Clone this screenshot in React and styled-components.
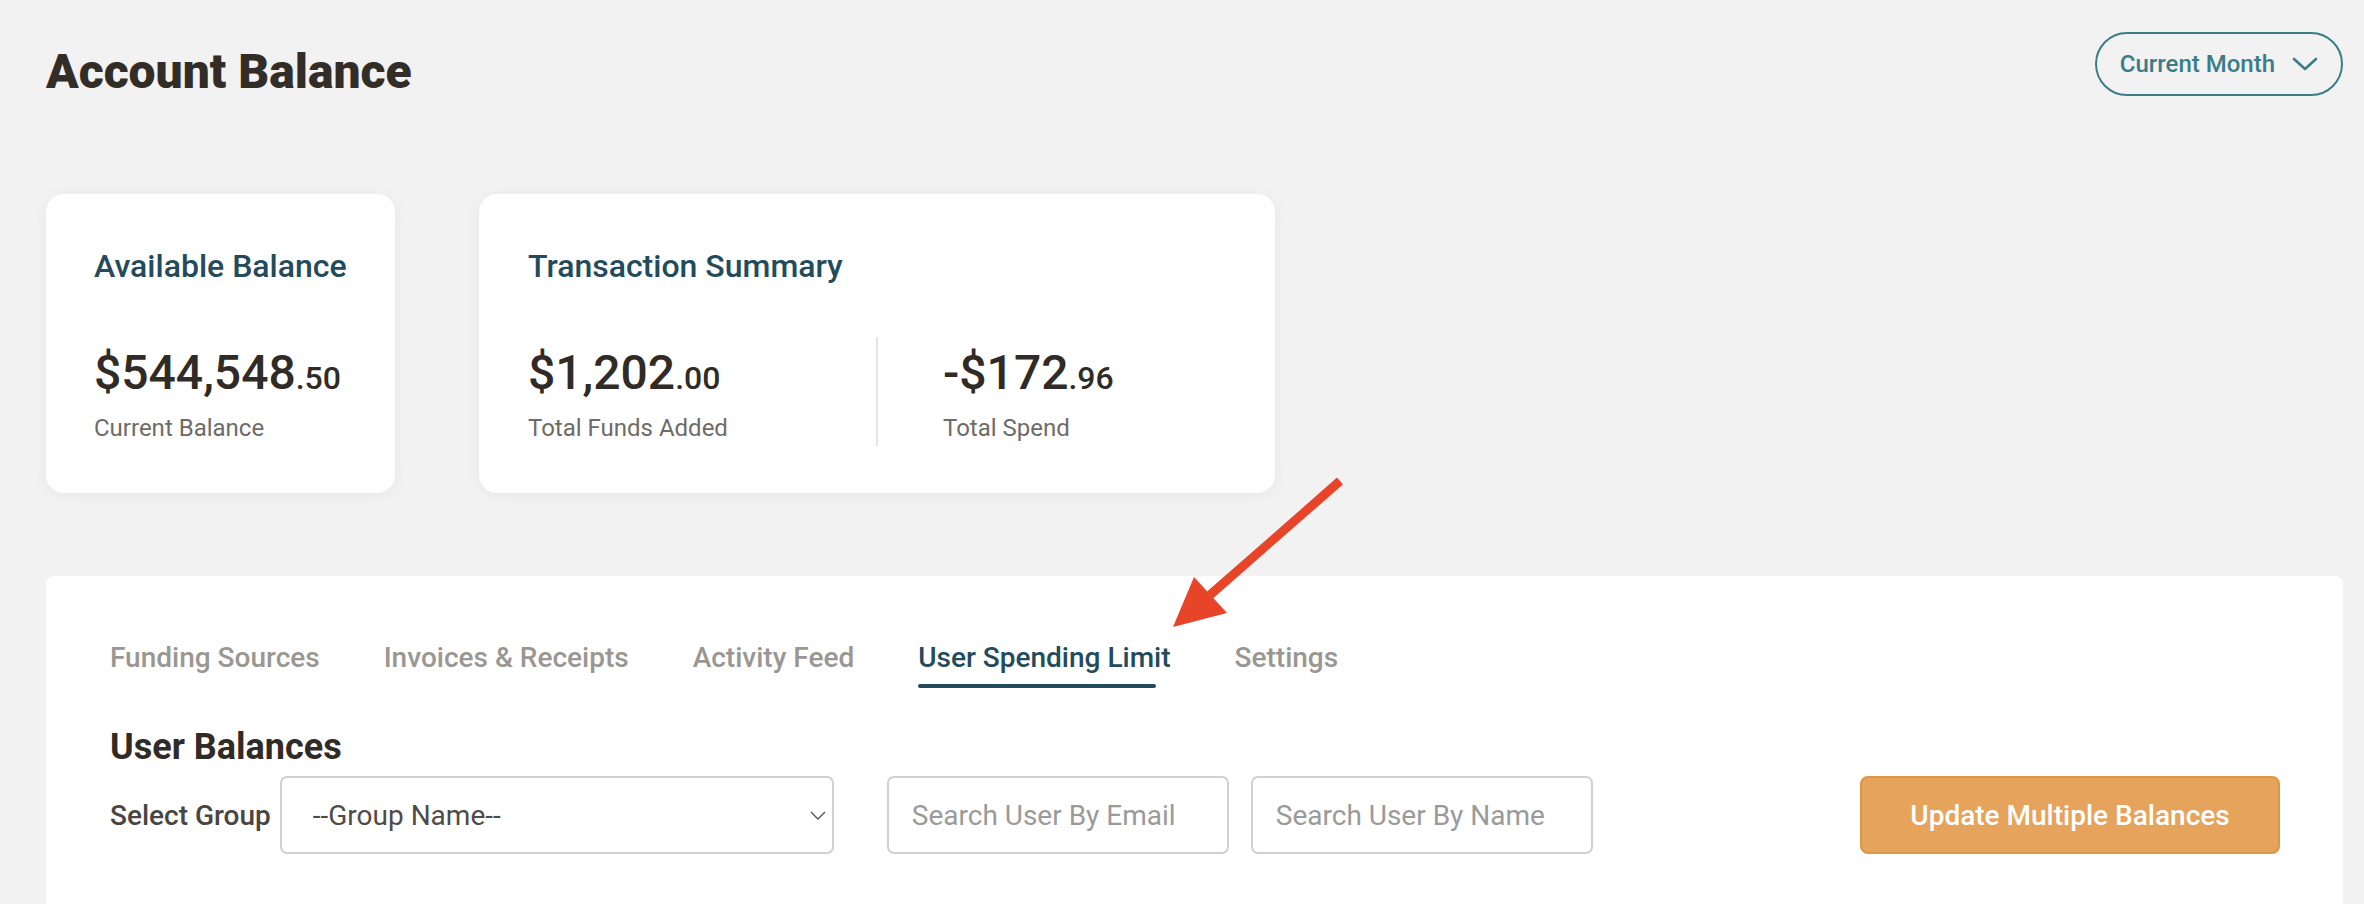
import styled, { createGlobalStyle } from "styled-components";

const GlobalStyle = createGlobalStyle`
  * { box-sizing: border-box; }
  html, body { margin: 0; padding: 0; }
  body {
    background: #f2f2f2;
    font-family: Roboto, "Noto Sans", "Liberation Sans", sans-serif;
    color: #322d27;
  }
`;

const tabs = [
  "Funding Sources",
  "Invoices & Receipts",
  "Activity Feed",
  "User Spending Limit",
  "Settings",
];

const Money = ({ whole, cents }) => (
  <Amount>
    {whole}
    <Cents>.{cents}</Cents>
  </Amount>
);

export default function App() {
  return (
    <>
      <GlobalStyle />
      <Page>
        <Header>
          <Title>Account Balance</Title>
          <PeriodButton>
            Current Month
            <svg width="26" height="14" viewBox="0 0 26 14" fill="none">
              <polyline points="2,2 13,12 24,2" stroke="currentColor" strokeWidth="2.6" strokeLinecap="round" strokeLinejoin="round" />
            </svg>
          </PeriodButton>
        </Header>

        <Cards>
          <Card>
            <CardTitle>Available Balance</CardTitle>
            <Stats>
              <Stat>
                <Money whole="$544,548" cents="50" />
                <StatLabel>Current Balance</StatLabel>
              </Stat>
            </Stats>
          </Card>

          <Card $wide>
            <CardTitle>Transaction Summary</CardTitle>
            <Stats>
              <Stat $width="348px">
                <Money whole="$1,202" cents="00" />
                <StatLabel>Total Funds Added</StatLabel>
              </Stat>
              <Divider />
              <Stat $pad="65px">
                <Money whole="-$172" cents="96" />
                <StatLabel>Total Spend</StatLabel>
              </Stat>
            </Stats>
          </Card>
        </Cards>

        <Panel>
          <Tabs>
            {tabs.map((t) => (
              <Tab key={t} $active={t === "User Spending Limit"}>{t}</Tab>
            ))}
          </Tabs>

          <SectionTitle>User Balances</SectionTitle>
          <FormRow>
            <FieldLabel>Select Group</FieldLabel>
            <SelectWrap>
              <Select defaultValue="">
                <option value="">--Group Name--</option>
              </Select>
              <svg width="16" height="9" viewBox="0 0 16 9" fill="none">
                <polyline points="1,1 8,8 15,1" stroke="#555" strokeWidth="1.4" />
              </svg>
            </SelectWrap>
            <SearchInput placeholder="Search User By Email" $ml="53px" />
            <SearchInput placeholder="Search User By Name" $ml="22px" />
            <UpdateButton>Update Multiple Balances</UpdateButton>
          </FormRow>
        </Panel>

        <Pointer width="200" height="170" viewBox="0 0 200 170">
          <line x1="180" y1="16" x2="50" y2="130" stroke="#e8442a" strokeWidth="9" />
          <polygon points="13,162 34,112 67,148" fill="#e8442a" />
        </Pointer>
      </Page>
    </>
  );
}

const Page = styled.div`
  position: relative;
  min-height: 100vh;
  display: flex;
  flex-direction: column;
  padding: 32px 21px 0 46px;
  overflow: hidden;
`;

const Header = styled.div`
  display: flex;
  justify-content: space-between;
  align-items: flex-start;
`;

const Title = styled.h1`
  margin: 11px 0 0;
  font-size: 48px;
  line-height: 58px;
  font-weight: 900;
  color: #332d27;
`;

const PeriodButton = styled.button`
  display: flex;
  align-items: center;
  gap: 17px;
  height: 64px;
  padding: 0 23px;
  border: 2px solid #3b7d87;
  border-radius: 32px;
  background: transparent;
  color: #3b7d87;
  font-family: inherit;
  font-size: 24px;
  font-weight: 500;
`;

const Cards = styled.div`
  display: flex;
  gap: 84px;
  margin-top: 93px;
`;

const Card = styled.div`
  width: ${(p) => (p.$wide ? "796px" : "349px")};
  height: 299px;
  padding: 53px 48px 0 ${(p) => (p.$wide ? "49px" : "48px")};
  background: #fff;
  border-radius: 18px;
  box-shadow: 0 2px 14px rgba(0, 0, 0, 0.05);
`;

const CardTitle = styled.h3`
  margin: 0;
  font-size: 32px;
  line-height: 38px;
  font-weight: 500;
  color: #234b5b;
`;

const Stats = styled.div`
  display: flex;
  margin-top: 52px;
`;

const Stat = styled.div`
  flex: 0 0 ${(p) => p.$width || "auto"};
  padding: 8px 0 4px ${(p) => p.$pad || "0"};
`;

const Divider = styled.div`
  width: 2px;
  background: #e6e6e6;
`;

const Amount = styled.div`
  font-size: 48px;
  line-height: 56px;
  font-weight: 500;
  color: #302b26;
`;

const Cents = styled.span`
  font-size: 32px;
`;

const StatLabel = styled.div`
  margin-top: 8px;
  font-size: 24px;
  line-height: 28px;
  color: #6e6b67;
`;

const Panel = styled.div`
  flex: 1;
  margin-top: 83px;
  padding: 65px 63px 0 64px;
  background: #fff;
  border-radius: 8px 8px 0 0;
`;

const Tabs = styled.div`
  display: flex;
  gap: 64px;
`;

const Tab = styled.div`
  position: relative;
  padding-bottom: 13px;
  font-size: 28px;
  line-height: 34px;
  font-weight: 500;
  color: ${(p) => (p.$active ? "#234b5b" : "#9a9793")};

  &::after {
    content: "";
    display: ${(p) => (p.$active ? "block" : "none")};
    position: absolute;
    left: 0;
    right: 15px;
    bottom: 0;
    height: 4px;
    border-radius: 2px;
    background: #234b5b;
  }
`;

const SectionTitle = styled.h2`
  margin: 38px 0 0;
  font-size: 36px;
  line-height: 42px;
  font-weight: 700;
  color: #302b26;
`;

const FormRow = styled.div`
  display: flex;
  align-items: center;
  margin-top: 8px;
`;

const FieldLabel = styled.span`
  margin-right: 9px;
  font-size: 28px;
  font-weight: 500;
  color: #4a4540;
`;

const SelectWrap = styled.div`
  position: relative;
  flex: 0 0 554px;
  height: 78px;

  & svg {
    position: absolute;
    right: 8px;
    top: 35px;
    pointer-events: none;
  }
`;

const Select = styled.select`
  appearance: none;
  width: 100%;
  height: 100%;
  padding: 0 40px 0 31px;
  border: 2px solid #d0d0d0;
  border-radius: 7px;
  background: #fff;
  font-family: inherit;
  font-size: 28px;
  color: #4f4b47;
`;

const SearchInput = styled.input`
  flex: 0 0 342px;
  width: 342px;
  height: 78px;
  margin-left: ${(p) => p.$ml};
  padding: 0 23px;
  border: 2px solid #d0d0d0;
  border-radius: 7px;
  font-family: inherit;
  font-size: 28px;
  color: #4f4b47;
  outline: none;

  &::placeholder {
    color: #9a9a9a;
  }
`;

const UpdateButton = styled.button`
  flex: 0 0 420px;
  height: 78px;
  margin-left: auto;
  border: 2px solid #dd9548;
  border-radius: 8px;
  background: #e5a35b;
  color: #fff;
  font-family: inherit;
  font-size: 28px;
  font-weight: 500;
`;

const Pointer = styled.svg`
  position: absolute;
  left: 1160px;
  top: 465px;
  pointer-events: none;
`;
